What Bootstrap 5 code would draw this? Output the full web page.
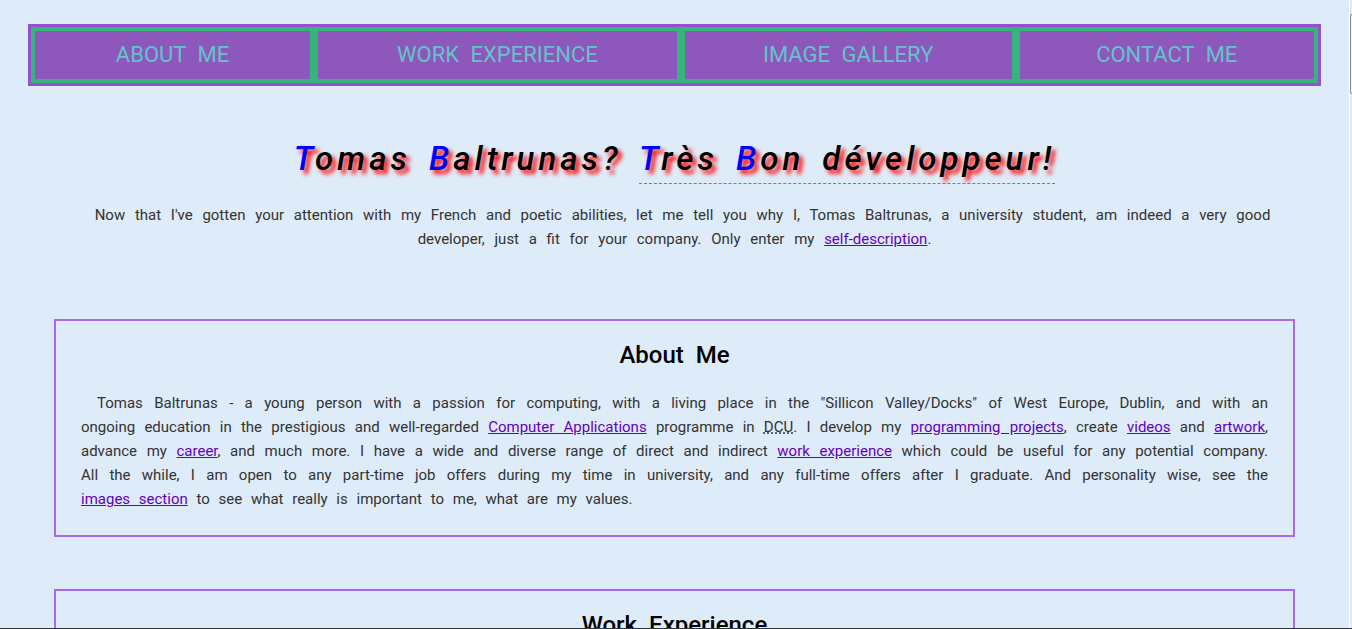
<!DOCTYPE html>
<html lang="en">
<head>
<meta charset="utf-8">
<meta name="viewport" content="width=device-width, initial-scale=1">
<title>Tomas Baltrunas</title>
<link href="https://cdn.jsdelivr.net/npm/bootstrap@5.3.0/dist/css/bootstrap.min.css" rel="stylesheet">
<style>
  body { background: #deebf8; color: #333; font-family: Roboto, sans-serif; font-size: 15px; line-height: 24px; word-spacing: 6px; }
  .page-view { height: 100vh; border-bottom: 1px solid #2b333c; }
  .page-body { padding: 24px 28px; }
  .main-menu { border: 3px solid #9251cf; background: #8e57bb; }
  .main-menu .nav-item { border: 4px solid #37b37b; flex: 302 1 0; }
  .main-menu .item-short { flex-grow: 282; }
  .main-menu .item-long { flex-grow: 368; }
  .main-menu .item-medium { flex-grow: 335; }
  .main-menu .nav-link { color: #62c3cb; font-size: 22px; line-height: 24px; padding: 12px 0; }
  .main-menu .nav-link:hover { color: #fff; }
  .page-title { color: #000; font-size: 33px; line-height: 40px; font-weight: 500; font-style: italic; letter-spacing: 4px; text-shadow: 4px 4px 4px #f00; margin: 53px 0 24px; }
  .page-title .initial { color: #00f; }
  .page-title abbr { text-decoration: none; border-bottom: 1px dashed #708090; padding-bottom: 5px; cursor: help; }
  .intro { margin: 0 26px 68px; text-indent: 16px; }
  .panel { border: 2px solid #a86ae8; padding: 20px 25px 24px; margin: 0 26px 52px; }
  .panel h2 { color: #000; font-size: 24px; line-height: 28px; font-weight: 500; margin: 0 0 22px; }
  .panel p { text-align: justify; text-indent: 16px; word-spacing: 5px; margin: 0; }
  p a { color: #60b; }
  p abbr { text-decoration: underline dotted; }
  .scroll-track { width: 3px; background: #e8e8e8; border-left: 1px solid #fff; padding-top: 14px; }
  .scroll-thumb { height: 80px; border: 1px solid #888; border-right: 0; border-radius: 2px 0 0 2px; background: #f4f4f4; }
</style>
</head>
<body>
<div class="page-view d-flex overflow-hidden">
  <div class="page-body flex-grow-1">
    <nav aria-label="Main">
      <ul class="main-menu nav flex-nowrap text-center text-uppercase">
        <li class="nav-item item-short"><a class="nav-link" href="#about">About Me</a></li>
        <li class="nav-item item-long"><a class="nav-link" href="#work">Work Experience</a></li>
        <li class="nav-item item-medium"><a class="nav-link" href="#gallery">Image Gallery</a></li>
        <li class="nav-item"><a class="nav-link" href="#contact">Contact Me</a></li>
      </ul>
    </nav>
    <main>
      <h1 class="page-title text-center"><span class="initial">T</span>omas <span class="initial">B</span>altrunas? <abbr><span class="initial">T</span>rès <span class="initial">B</span>on développeur!</abbr></h1>
      <p class="intro text-center">Now that I've gotten your attention with my French and poetic abilities, let me tell you why I, Tomas Baltrunas, a university student, am indeed a very good developer, just a fit for your company. Only enter my <a href="#about">self-description</a>.</p>
      <section class="panel" id="about">
        <h2 class="text-center">About Me</h2>
        <p>Tomas Baltrunas - a young person with a passion for computing, with a living place in the "Sillicon Valley/Docks" of West Europe, Dublin, and with an ongoing&nbsp;education in the prestigious and well-regarded <a href="#course">Computer Applications</a> programme in <abbr>DCU</abbr>. I develop my <a href="#projects">programming projects</a>, create <a href="#videos">videos</a> and <a href="#artwork">artwork</a>, advance my <a href="#career">career</a>, and much more. I have a wide and diverse range of direct and indirect <a href="#work">work experience</a> which could be useful for any potential company. All the while, I am open to any part-time job offers during my time in university, and any full-time offers after I graduate. And personality wise, see the <a href="#gallery">images&nbsp;section</a> to see what really is important to me, what are my values.</p>
      </section>
      <section class="panel" id="work">
        <h2 class="text-center">Work Experience</h2>
      </section>
    </main>
  </div>
  <div class="scroll-track flex-shrink-0" aria-hidden="true"><div class="scroll-thumb"></div></div>
</div>
<script src="https://cdn.jsdelivr.net/npm/bootstrap@5.3.0/dist/js/bootstrap.bundle.min.js"></script>
</body>
</html>
